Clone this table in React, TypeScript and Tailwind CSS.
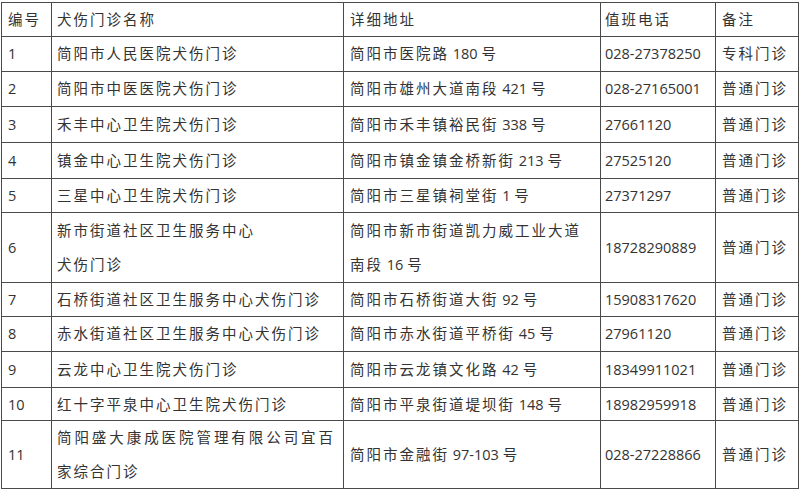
type Row = {
  no: string
  name: string[]
  addr: string[]
  tel: string
  note: string
  h: string
  justifyFirst?: boolean
}

const rows: Row[] = [
  { no: '1', name: ['简阳市人民医院犬伤门诊'], addr: ['简阳市医院路 180 号'], tel: '028-27378250', note: '专科门诊', h: 'h-[35px]' },
  { no: '2', name: ['简阳市中医医院犬伤门诊'], addr: ['简阳市雄州大道南段 421 号'], tel: '028-27165001', note: '普通门诊', h: 'h-[35px]' },
  { no: '3', name: ['禾丰中心卫生院犬伤门诊'], addr: ['简阳市禾丰镇裕民街 338 号'], tel: '27661120', note: '普通门诊', h: 'h-[36px]' },
  { no: '4', name: ['镇金中心卫生院犬伤门诊'], addr: ['简阳市镇金镇金桥新街 213 号'], tel: '27525120', note: '普通门诊', h: 'h-[36px]' },
  { no: '5', name: ['三星中心卫生院犬伤门诊'], addr: ['简阳市三星镇祠堂街 1 号'], tel: '27371297', note: '普通门诊', h: 'h-[34px]' },
  {
    no: '6',
    name: ['新市街道社区卫生服务中心', '犬伤门诊'],
    addr: ['简阳市新市街道凯力威工业大道', '南段 16 号'],
    tel: '18728290889',
    note: '普通门诊',
    h: 'h-[70px]',
  },
  { no: '7', name: ['石桥街道社区卫生服务中心犬伤门诊'], addr: ['简阳市石桥街道大街 92 号'], tel: '15908317620', note: '普通门诊', h: 'h-[34px]' },
  { no: '8', name: ['赤水街道社区卫生服务中心犬伤门诊'], addr: ['简阳市赤水街道平桥街 45 号'], tel: '27961120', note: '普通门诊', h: 'h-[35px]' },
  { no: '9', name: ['云龙中心卫生院犬伤门诊'], addr: ['简阳市云龙镇文化路 42 号'], tel: '18349911021', note: '普通门诊', h: 'h-[36px]' },
  { no: '10', name: ['红十字平泉中心卫生院犬伤门诊'], addr: ['简阳市平泉街道堤坝街 148 号'], tel: '18982959918', note: '普通门诊', h: 'h-[33px]' },
  {
    no: '11',
    name: ['简阳盛大康成医院管理有限公司宜百', '家综合门诊'],
    addr: ['简阳市金融街 97-103 号'],
    tel: '028-27228866',
    note: '普通门诊',
    h: 'h-[68px]',
    justifyFirst: true,
  },
]

// CJK runs get the wider grid spacing, latin digits keep their own width
function Txt({ text }: { text: string }) {
  const parts = text.match(/[\u4e00-\u9fff]+|[^\u4e00-\u9fff]+/g) ?? []
  return (
    <>
      {parts.map((p, i) =>
        /[\u4e00-\u9fff]/.test(p) ? (
          <span key={i} className="tracking-[2px]">
            {p}
          </span>
        ) : (
          <span key={i}>{p}</span>
        ),
      )}
    </>
  )
}

const cols = 'grid grid-cols-[50px_292px_257px_115px_83px]'
const cell = 'flex items-center border-r border-[#4a4a4a] leading-[34px] whitespace-nowrap'

function Lines({ lines, justifyFirst }: { lines: string[]; justifyFirst?: boolean }) {
  return (
    <div className="flex flex-col w-full">
      {lines.map((l, i) => (
        <div
          key={i}
          className={i === 0 && justifyFirst ? 'text-justify [text-align-last:justify]' : ''}
        >
          <Txt text={l} />
        </div>
      ))}
    </div>
  )
}

export default function App() {
  return (
    <main className="min-h-[493px] bg-white pt-[2px] pl-[1px] font-['Open_Sans','Noto_Sans_CJK_SC',sans-serif] text-[14.5px] text-[#333]">
      <div className="w-[798px] border-l border-t border-[#4a4a4a]">
        <div className={`${cols} h-[34px] border-b border-[#4a4a4a]`}>
          <div className={`${cell} pl-[6px]`}>
            <Txt text="编号" />
          </div>
          <div className={`${cell} pl-[5px]`}>
            <Txt text="犬伤门诊名称" />
          </div>
          <div className={`${cell} pl-[6px]`}>
            <Txt text="详细地址" />
          </div>
          <div className={`${cell} pl-[4px]`}>
            <Txt text="值班电话" />
          </div>
          <div className={`${cell} pl-[6px]`}>
            <Txt text="备注" />
          </div>
        </div>

        {rows.map((r) => (
          <div key={r.no} className={`${cols} ${r.h} border-b border-[#4a4a4a]`}>
            <div className={`${cell} pl-[6px]`}>{r.no}</div>
            <div className={`${cell} pl-[5px] pr-[8px]`}>
              <Lines lines={r.name} justifyFirst={r.justifyFirst} />
            </div>
            <div className={`${cell} pl-[6px]`}>
              <Lines lines={r.addr} />
            </div>
            <div className={`${cell} pl-[4px]`}>{r.tel}</div>
            <div className={`${cell} pl-[6px]`}>
              <Txt text={r.note} />
            </div>
          </div>
        ))}
      </div>
    </main>
  )
}
